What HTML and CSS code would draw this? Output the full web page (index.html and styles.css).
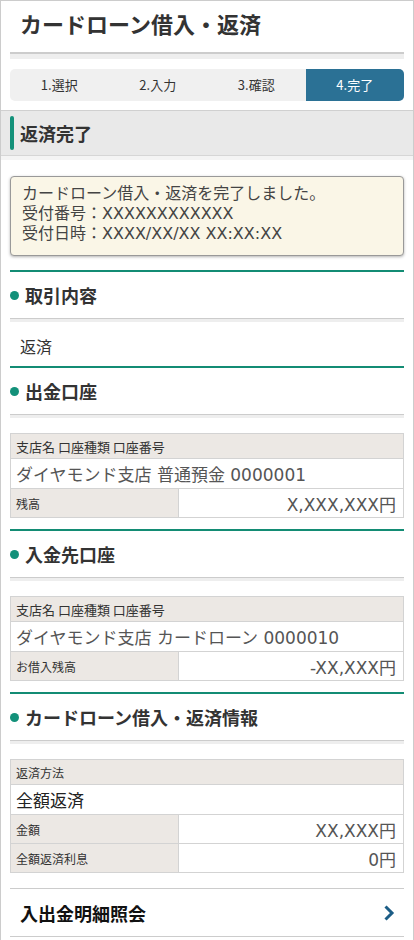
FILE: index.html
```html
<!DOCTYPE html>
<html lang="ja">
  <head>
    <meta charset="utf-8">
    <title>カードローン借入・返済</title>
    <link rel="stylesheet" href="styles.css">
  </head>

  <body>
    <div class="page">
      <h1 class="page-title">カードローン借入・返済</h1>
      <div class="title-rule"></div>

      <ol class="steps">
        <li>1.選択</li>
        <li>2.入力</li>
        <li>3.確認</li>
        <li class="is-current">4.完了</li>
      </ol>

      <h2 class="status-head">返済完了</h2>

      <div class="notice">
        カードローン借入・返済を完了しました。<br>
        受付番号：XXXXXXXXXXXX<br>
        受付日時：XXXX/XX/XX XX:XX:XX
      </div>

      <section class="block">
        <h3 class="block-title">取引内容</h3>
        <div class="block-body">
          <p class="block-text">返済</p>
        </div>
      </section>

      <section class="block">
        <h3 class="block-title">出金口座</h3>
        <div class="block-body">
          <table class="info">
            <tr>
              <th colspan="2" class="head-row">支店名 口座種類 口座番号</th>
            </tr>
            <tr>
              <td colspan="2" class="value-row">ダイヤモンド支店 普通預金 0000001</td>
            </tr>
            <tr>
              <th class="label">残高</th>
              <td class="amount">X,XXX,XXX円</td>
            </tr>
          </table>
        </div>
      </section>

      <section class="block">
        <h3 class="block-title">入金先口座</h3>
        <div class="block-body">
          <table class="info">
            <tr>
              <th colspan="2" class="head-row">支店名 口座種類 口座番号</th>
            </tr>
            <tr>
              <td colspan="2" class="value-row">ダイヤモンド支店 カードローン 0000010</td>
            </tr>
            <tr>
              <th class="label">お借入残高</th>
              <td class="amount">-XX,XXX円</td>
            </tr>
          </table>
        </div>
      </section>

      <section class="block">
        <h3 class="block-title">カードローン借入・返済情報</h3>
        <div class="block-body">
          <table class="info last">
            <tr>
              <th colspan="2" class="head-row small">返済方法</th>
            </tr>
            <tr>
              <td colspan="2" class="value-row dark">全額返済</td>
            </tr>
            <tr>
              <th class="label">金額</th>
              <td class="amount">XX,XXX円</td>
            </tr>
            <tr>
              <th class="label">全額返済利息</th>
              <td class="amount">0円</td>
            </tr>
          </table>
        </div>
      </section>

      <a class="link-row" href="#">
        <span>入出金明細照会</span>
        <svg class="chevron" width="12" height="18" viewBox="0 0 12 18">
          <polyline points="2.5,2.5 9,9 2.5,15.5" fill="none" stroke="#1c5d86" stroke-width="3" />
        </svg>
      </a>
    </div>
  </body>
</html>
```

FILE: styles.css
```css
*,
*:before,
*:after {
  box-sizing: border-box;
}

body {
  margin: 0;
  padding: 0;
  font-family: "Noto Sans CJK JP", "Noto Sans", sans-serif;
  color: #333;
  background-color: #fff;
}

.page {
  border: 1px solid #ccc;
  padding: 0 9px 4px;
}

.page-title {
  margin: 0;
  padding: 7px 10px 14px;
  font-size: 22px;
  line-height: 30px;
  font-weight: bold;
  color: #333;
}

.title-rule {
  height: 7px;
  border-top: 2px solid #ccc;
  background-color: #eee;
}

/* step indicator */
.steps {
  list-style: none;
  margin: 10px 0 0;
  padding: 0;
  display: grid;
  grid-template-columns: repeat(4, 1fr);
  background-color: #f0f0f0;
  border-radius: 5px;
  overflow: hidden;
}

.steps li {
  height: 32px;
  line-height: 32px;
  text-align: center;
  font-size: 13px;
  color: #333;
}

.steps .is-current {
  background-color: #2b7195;
  color: #fff;
}

/* status header */
.status-head {
  margin: 9px -9px 0;
  padding: 0 9px;
  height: 46px;
  display: flex;
  align-items: center;
  gap: 6px;
  font-size: 18px;
  font-weight: bold;
  background-color: #e9e9e9;
  border-top: 1px solid #d0d0d0;
  border-bottom: 1px solid #d6d6d6;
  box-shadow: 0 4px 0 #f4f4f4;
}

.status-head:before {
  content: "";
  width: 4px;
  height: 34px;
  border-radius: 2px;
  background-color: #13917a;
}

.notice {
  margin-top: 20px;
  padding: 7px 11px 11px;
  font-family: "DejaVu Sans", "Noto Sans CJK JP", sans-serif;
  font-size: 16px;
  line-height: 20px;
  color: #444;
  background-color: #faf6e7;
  border: 1px solid #999;
  border-radius: 4px;
  box-shadow: 0 1px 3px rgba(0, 0, 0, 0.3);
}

/* sections */
.block {
  margin-top: 14px;
  border-top: 2px solid #138c74;
}

.block + .block {
  margin-top: 0;
}

.block-title {
  margin: 0;
  height: 47px;
  display: flex;
  align-items: center;
  gap: 6px;
  font-size: 18px;
  font-weight: bold;
  color: #333;
  border-bottom: 1px solid #ccc;
}

.block-title:before {
  content: "";
  width: 9px;
  height: 9px;
  border-radius: 50%;
  background-color: #13917a;
}

.block-body {
  border-top: 3px solid #eee;
}

.block-text {
  margin: 0;
  padding: 14px 10px 10px;
  font-size: 16px;
  line-height: 20px;
}

/* tables */
.info {
  width: 100%;
  margin: 15px 0 11px;
  border-collapse: collapse;
  border: 1px solid #d3d3d3;
}

.info.last {
  margin-bottom: 0;
}

.info th,
.info td {
  border: 1px solid #d3d3d3;
  padding: 0 7px 0 5px;
  text-align: left;
  font-weight: normal;
}

.info .head-row {
  height: 25px;
  font-size: 13px;
  background-color: #ece8e4;
}

.info .head-row.small {
  font-size: 12px;
}

.info .value-row {
  height: 30px;
  font-family: "DejaVu Sans", "Noto Sans CJK JP", sans-serif;
  font-size: 17px;
  color: #555;
}

.info .value-row.dark {
  color: #222;
}

.info .label {
  width: 168px;
  height: 29px;
  font-size: 12px;
  background-color: #ece8e4;
}

.info .amount {
  text-align: right;
  font-family: "DejaVu Sans", "Noto Sans CJK JP", sans-serif;
  font-size: 17px;
  color: #555;
}

/* link row */
.link-row {
  margin-top: 15px;
  height: 49px;
  padding: 0 9px 0 10px;
  display: flex;
  align-items: center;
  justify-content: space-between;
  font-size: 18px;
  font-weight: bold;
  color: #111;
  text-decoration: none;
  border-top: 1px solid #ccc;
  border-bottom: 1px solid #ccc;
}
```
